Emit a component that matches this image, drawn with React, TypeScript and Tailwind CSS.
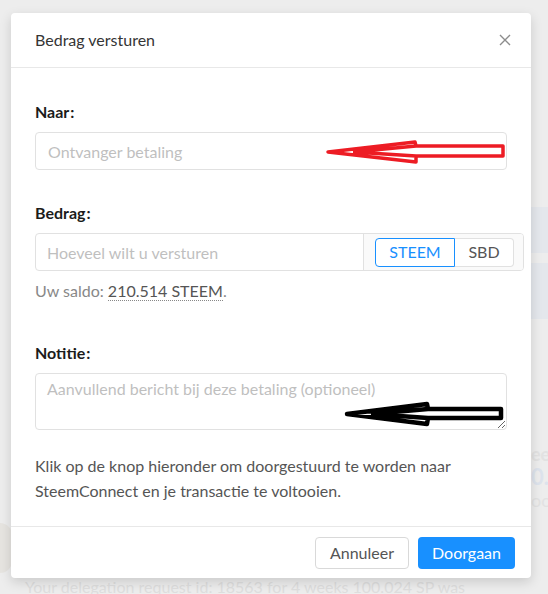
import React from "react";

const font = { fontFamily: "Lato, 'Open Sans', sans-serif" };

export default function App() {
  return (
    <div className="relative w-[548px] h-[594px] overflow-hidden bg-[#ededed]" style={font}>
      {/* faint page behind the overlay */}
      <div className="flex flex-col">
        <div className="h-[207px]" />
        <div className="flex justify-end">
          <div className="w-[17px] h-[46px] bg-[#e4e7ec]" />
        </div>
        <div className="h-[10px]" />
        <div className="flex justify-end">
          <div className="w-[17px] h-[56px] bg-[#e4e7ec]" />
        </div>
        <div className="h-[124px]" />
        <div className="flex justify-end text-[18px] leading-[22px] text-[#e2e2e2] font-bold">
          <span className="w-[17px] overflow-hidden whitespace-nowrap">ee</span>
        </div>
        <div className="flex justify-end text-[22px] leading-[24px] text-[#dde3ec] font-bold">
          <span className="w-[17px] overflow-hidden whitespace-nowrap">0.</span>
        </div>
        <div className="flex justify-end text-[18px] leading-[22px] text-[#e2e2e2]">
          <span className="w-[17px] overflow-hidden whitespace-nowrap">oo</span>
        </div>
        <div className="h-[62px] flex items-end">
          <div className="w-[12px] h-[50px] rounded-r-full bg-[#e6e4e0]" />
        </div>
        <div className="pl-[25px] text-[16px] leading-[20px] text-[#dedede] whitespace-nowrap mt-[4px]">
          Your delegation request id: 18563 for 4 weeks 100.024 SP was
        </div>
      </div>

      {/* modal */}
      <div className="absolute left-[11px] top-[13px] w-[520px] bg-white rounded-[4px] shadow-[0_4px_12px_rgba(0,0,0,0.15)] flex flex-col">
        <div className="h-[54px] px-[24px] flex items-center justify-between border-b border-[#e8e8e8] box-content">
          <span className="text-[16px] text-[#353535]">Bedrag versturen</span>
          <svg width="12" height="12" viewBox="0 0 12 12" className="mr-[-4px]">
            <path d="M1 1 L11 11 M11 1 L1 11" stroke="#8c8c8c" strokeWidth="1.4" />
          </svg>
        </div>

        <div className="px-[24px] pt-[32px] pb-[23px] flex flex-col">
          <label className="text-[16px] leading-[24px] font-bold text-[#1b1b1b]">
            Naar<span className="ml-[1px]">:</span>
          </label>
          <div className="relative mt-[8px] h-[38px]">
            <input
              placeholder="Ontvanger betaling"
              className="w-full h-full border border-[#e1e1e1] rounded-[4px] px-[12px] text-[16px] placeholder:text-[#bfbfbf] outline-none"
              style={font}
            />
            <svg className="absolute left-0 top-0 pointer-events-none" width="471" height="38" viewBox="0 0 471 38">
              <path
                d="M293 20 L380 10 L381 14 L468 14 L468 24 L381 24 L381 30 Z M318 20 L381 14 M318 20 L381 24"
                fill="none"
                stroke="#ed1c24"
                strokeWidth="3.5"
                strokeLinejoin="round"
              />
            </svg>
          </div>

          <label className="mt-[31px] text-[16px] leading-[24px] font-bold text-[#1b1b1b]">
            Bedrag<span className="ml-[1px]">:</span>
          </label>
          <div className="mt-[8px] h-[38px] w-[489px] flex border border-[#e1e1e1] rounded-[4px] overflow-hidden">
            <input
              placeholder="Hoeveel wilt u versturen"
              className="flex-1 min-w-0 h-full px-[11px] text-[16px] placeholder:text-[#bfbfbf] outline-none"
              style={font}
            />
            <div className="w-[160px] h-full bg-[#fafafa] border-l border-[#e1e1e1] flex items-center pl-[11px]">
              <div className="h-[29px] w-[80px] border border-[#1890ff] rounded-l-[4px] bg-white flex items-center justify-center text-[16px] text-[#1890ff]">
                STEEM
              </div>
              <div className="h-[29px] w-[59px] border border-l-0 border-[#e1e1e1] rounded-r-[4px] bg-white flex items-center justify-center text-[16px] text-[#555]">
                SBD
              </div>
            </div>
          </div>
          <div className="mt-[8px] text-[16px] leading-[24px] text-[#888]">
            Uw saldo:{" "}
            <span className="text-[#555] border-b border-dotted border-[#888]">210.514 STEEM</span>.
          </div>

          <label className="mt-[38px] text-[16px] leading-[24px] font-bold text-[#1b1b1b]">
            Notitie<span className="ml-[1px]">:</span>
          </label>
          <div className="relative mt-[8px] h-[57px]">
            <textarea
              placeholder="Aanvullend bericht bij deze betaling (optioneel)"
              className="block w-full h-full border border-[#e1e1e1] rounded-[4px] px-[11px] pt-[3px] text-[16px] leading-[24px] placeholder:text-[#bfbfbf] outline-none"
              style={font}
            />
            <svg className="absolute left-0 top-0 pointer-events-none" width="471" height="57" viewBox="0 0 471 57">
              <path
                d="M312 41 L392 31 L393 36 L466 36 L466 45 L393 45 L392 51 Z M336 41 L393 36 M336 41 L393 45"
                fill="none"
                stroke="#000"
                strokeWidth="4.5"
                strokeLinejoin="round"
              />
            </svg>
          </div>

          <p className="mt-[23px] text-[16px] leading-[25px] text-[#555]">
            Klik op de knop hieronder om doorgestuurd te worden naar SteemConnect en je transactie te voltooien.
          </p>
        </div>

        <div className="border-t border-[#e8e8e8] px-[16px] pt-[10px] pb-[9px] flex justify-end gap-[9px]">
          <button className="h-[32px] w-[94px] border border-[#d9d9d9] rounded-[4px] bg-white text-[16px] text-[#555]" style={font}>
            Annuleer
          </button>
          <button className="h-[32px] w-[97px] rounded-[4px] bg-[#1890ff] text-[16px] text-white" style={font}>
            Doorgaan
          </button>
        </div>
      </div>
    </div>
  );
}
